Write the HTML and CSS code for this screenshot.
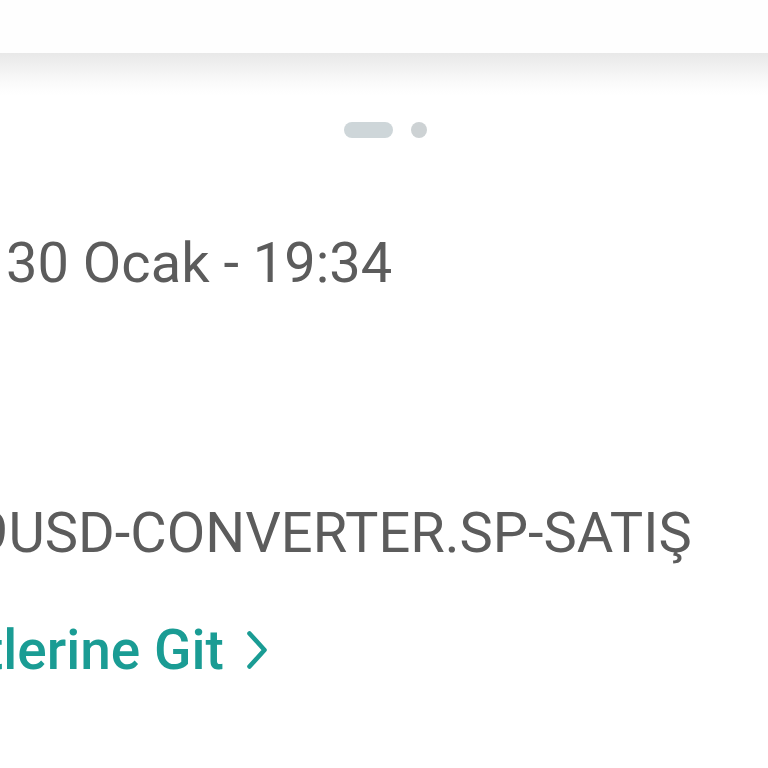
FILE: index.html
```
<!DOCTYPE html>
<html lang="tr">
<head>
<meta charset="utf-8">
<link rel="stylesheet" href="styles.css">
</head>
<body>
<div class="page">
  <div class="header"></div>
  <div class="shadow"></div>
  <div class="dots">
    <span class="pill"></span>
    <span class="dot"></span>
  </div>
  <div class="content">
    <div class="date">30 Ocak - 19:34</div>
    <div class="desc">9USD-CONVERTER.SP-SATIŞ</div>
    <div class="link"><span class="link-text">tlerine Git</span><svg class="chev" width="20" height="38" viewBox="0 0 20 38"><polyline points="2.5,2.5 17.5,19 2.5,35.5" fill="none" stroke="#1a9c94" stroke-width="4.6" stroke-linecap="round" stroke-linejoin="round"/></svg></div>
  </div>
</div>
</body>
</html>
```
FILE: styles.css
```
html, body {
  margin: 0;
  padding: 0;
  background: #ffffff;
}
.page {
  width: 768px;
  height: 768px;
  overflow: hidden;
  font-family: Roboto, "Noto Sans", sans-serif;
  background: #fff;
}
.header {
  height: 53px;
  background: #fefefe;
}
.shadow {
  height: 42px;
  background: linear-gradient(to bottom, #e8e8e8 0%, #f1f1f1 35%, #fafafa 70%, #ffffff 100%);
}
.dots {
  margin-top: 27px;
  height: 16px;
  display: flex;
  justify-content: center;
  gap: 18px;
  padding-left: 3px;
}
.pill {
  width: 49px;
  height: 16px;
  border-radius: 8px;
  background: #ced6d9;
}
.dot {
  width: 16px;
  height: 16px;
  border-radius: 50%;
  background: #cdd2d4;
}
.content {
  padding-left: 6px;
  white-space: nowrap;
}
.date {
  margin-top: 93px;
  font-size: 56px;
  line-height: 64px;
  color: #5c5c5c;
}
.desc {
  margin-top: 206px;
  font-size: 56px;
  line-height: 64px;
  color: #5c5c5c;
  text-indent: -29px;
}
.link {
  margin-top: 53px;
  height: 64px;
  display: flex;
  align-items: center;
  margin-left: -21px;
}
.link-text {
  font-size: 55px;
  line-height: 64px;
  font-weight: 500;
  color: #1a9c94;
}
.chev {
  margin-left: 23px;
  margin-top: -1px;
}
```
